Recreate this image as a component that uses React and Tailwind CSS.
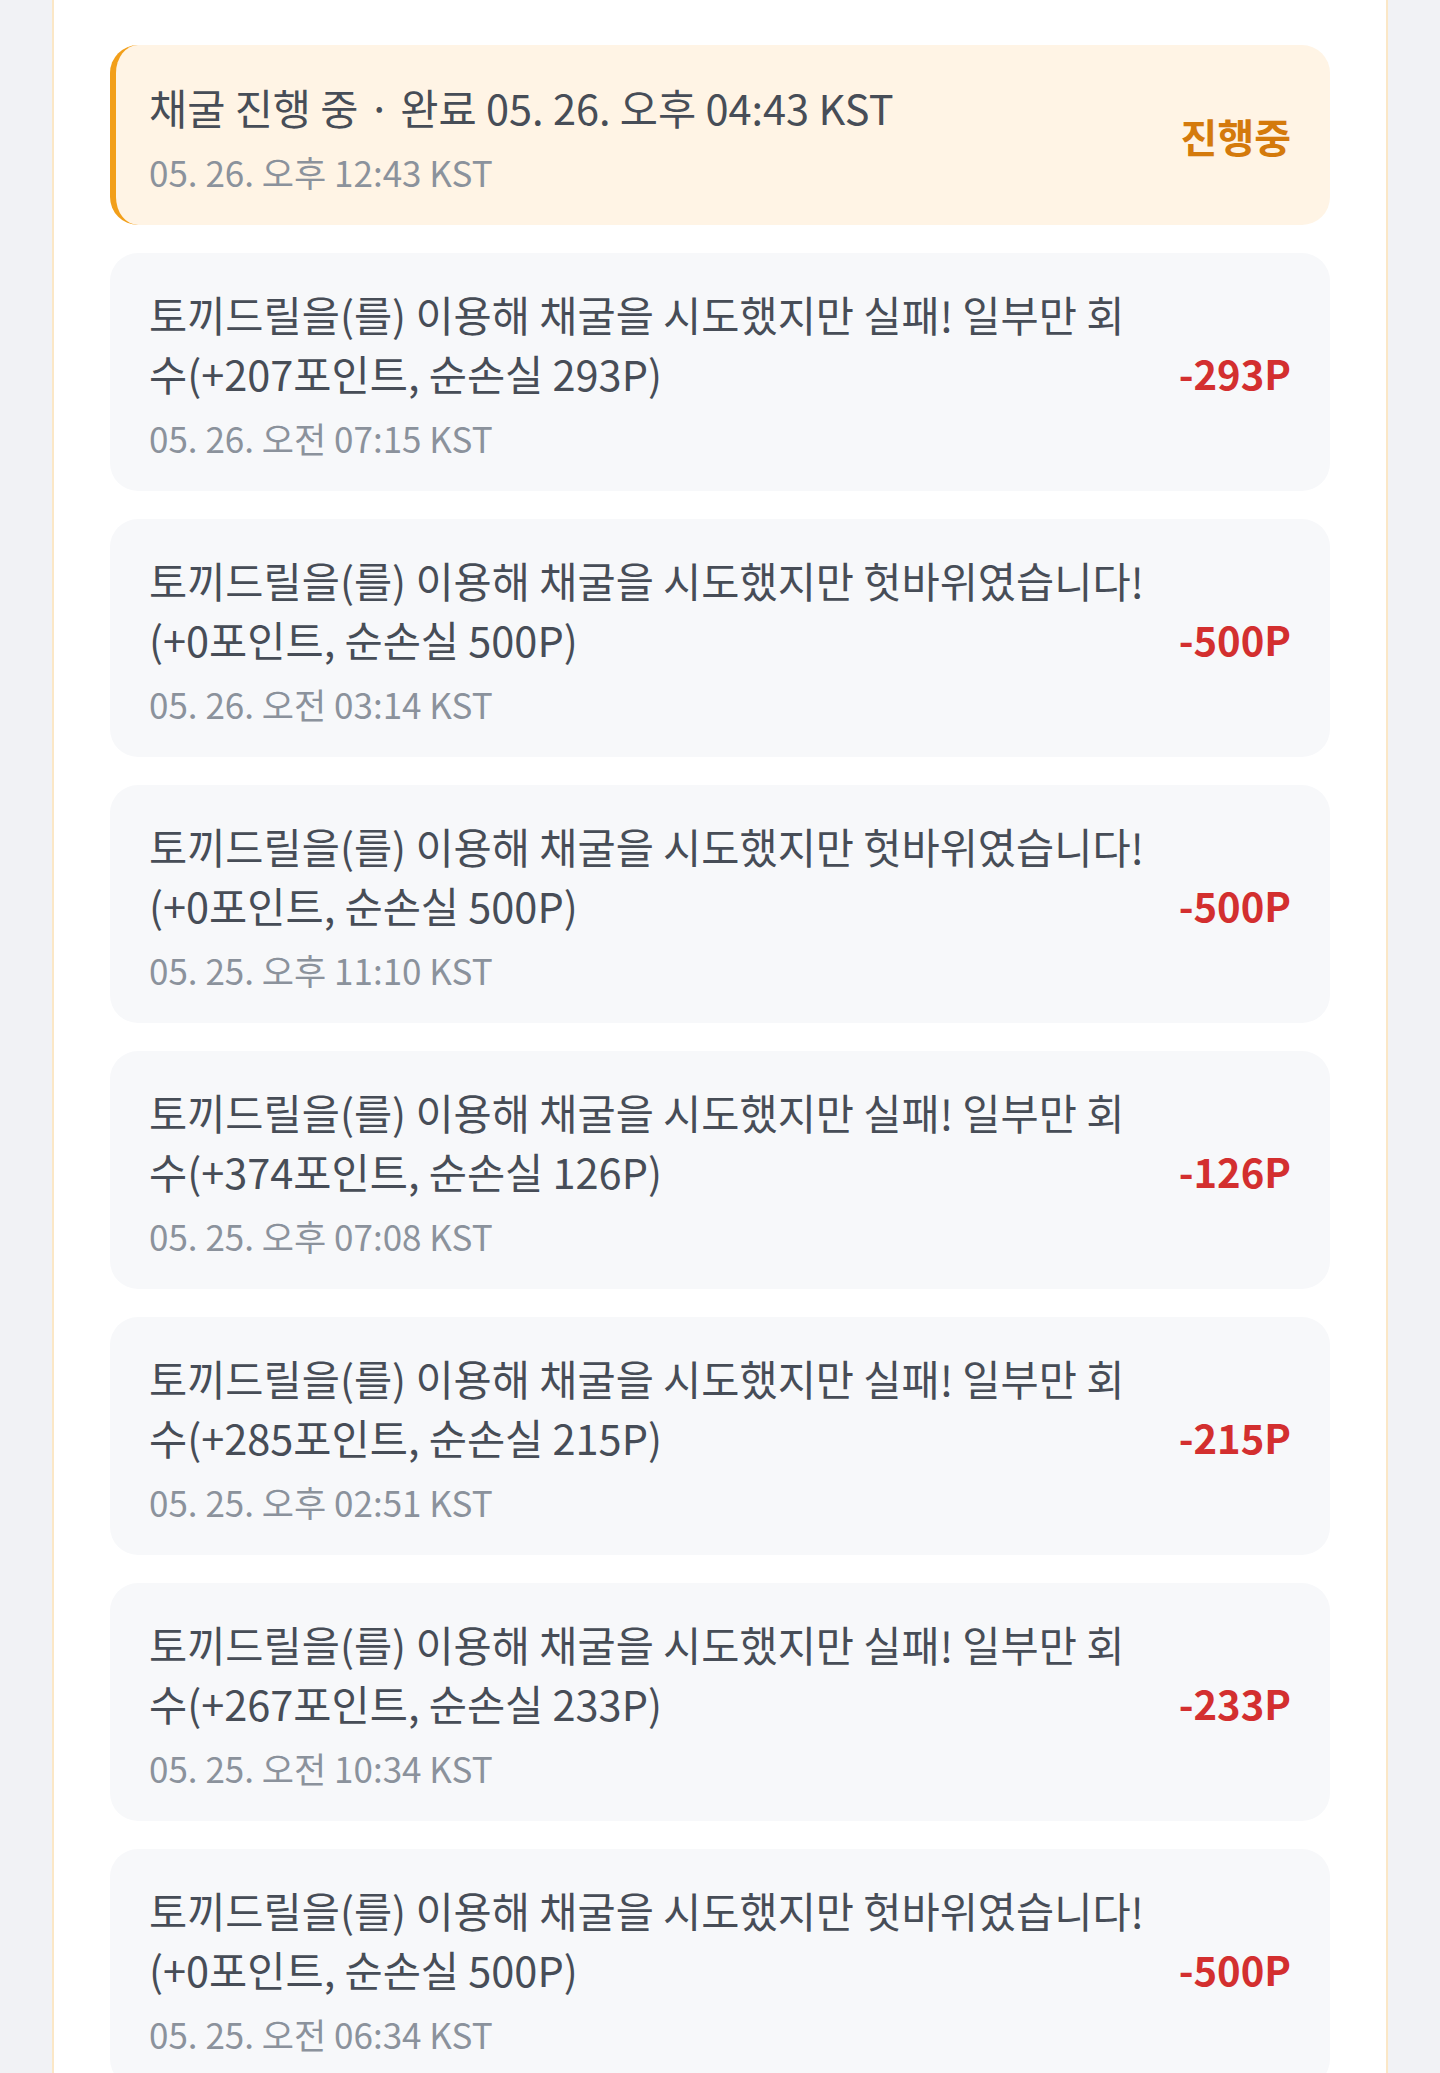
import React from 'react';

const records = [
  { text: '토끼드릴을(를) 이용해 채굴을 시도했지만 실패! 일부만 회수(+207포인트, 순손실 293P)', time: '05. 26. 오전 07:15 KST', amount: '-293P' },
  { text: '토끼드릴을(를) 이용해 채굴을 시도했지만 헛바위였습니다!(+0포인트, 순손실 500P)', time: '05. 26. 오전 03:14 KST', amount: '-500P' },
  { text: '토끼드릴을(를) 이용해 채굴을 시도했지만 헛바위였습니다!(+0포인트, 순손실 500P)', time: '05. 25. 오후 11:10 KST', amount: '-500P' },
  { text: '토끼드릴을(를) 이용해 채굴을 시도했지만 실패! 일부만 회수(+374포인트, 순손실 126P)', time: '05. 25. 오후 07:08 KST', amount: '-126P' },
  { text: '토끼드릴을(를) 이용해 채굴을 시도했지만 실패! 일부만 회수(+285포인트, 순손실 215P)', time: '05. 25. 오후 02:51 KST', amount: '-215P' },
  { text: '토끼드릴을(를) 이용해 채굴을 시도했지만 실패! 일부만 회수(+267포인트, 순손실 233P)', time: '05. 25. 오전 10:34 KST', amount: '-233P' },
  { text: '토끼드릴을(를) 이용해 채굴을 시도했지만 헛바위였습니다!(+0포인트, 순손실 500P)', time: '05. 25. 오전 06:34 KST', amount: '-500P' },
];

const font = { fontFamily: '"Noto Sans CJK KR", "Noto Sans", sans-serif' };

const RecordRow = ({ text, time, amount }) => (
  <div className="flex items-center gap-[28px] rounded-[28px] bg-[#f7f8fa] px-[39px] pb-[31px] pt-[32px]">
    <div className="w-[1000px] min-w-0">
      <p className="text-[41.5px] leading-[59px] text-[#474d57]">{text}</p>
      <p className="mt-[13px] text-[35px] leading-[44px] text-[#8b929c]">{time}</p>
    </div>
    <div className="ml-auto shrink-0 text-[40px] font-bold text-[#d32f2f]">{amount}</div>
  </div>
);

export default function App() {
  return (
    <div className="h-[2073px] overflow-hidden bg-[#f1f2f5]" style={font}>
      <div className="mx-[52px] flex h-full flex-col border-x-2 border-[#fbe7c6] bg-white px-[56px]">
        {/* header line, scrolled almost out of view */}
        <div className="-mt-[38px] h-[42px] shrink-0 text-[34px] leading-[42px] text-[#e3e5e9]">
          최근 채굴 기록을 확인하세요
        </div>
        <div className="mt-[41px] flex flex-col gap-[28px]">
          <div className="flex items-center gap-[28px] rounded-[28px] border-l-[6px] border-[#f29f1a] bg-[#fff4e5] pb-[31px] pt-[33px] pl-[33px] pr-[39px]">
            <div className="min-w-0 flex-1">
              <p className="text-[41.5px] leading-[59px] text-[#474d57]">채굴 진행 중 · 완료 05. 26. 오후 04:43 KST</p>
              <p className="mt-[13px] text-[35px] leading-[44px] text-[#8b929c]">05. 26. 오후 12:43 KST</p>
            </div>
            <div className="shrink-0 text-[40px] font-bold text-[#d47a0c]">진행중</div>
          </div>
          {records.map((r, i) => (
            <RecordRow key={i} {...r} />
          ))}
        </div>
      </div>
    </div>
  );
}
